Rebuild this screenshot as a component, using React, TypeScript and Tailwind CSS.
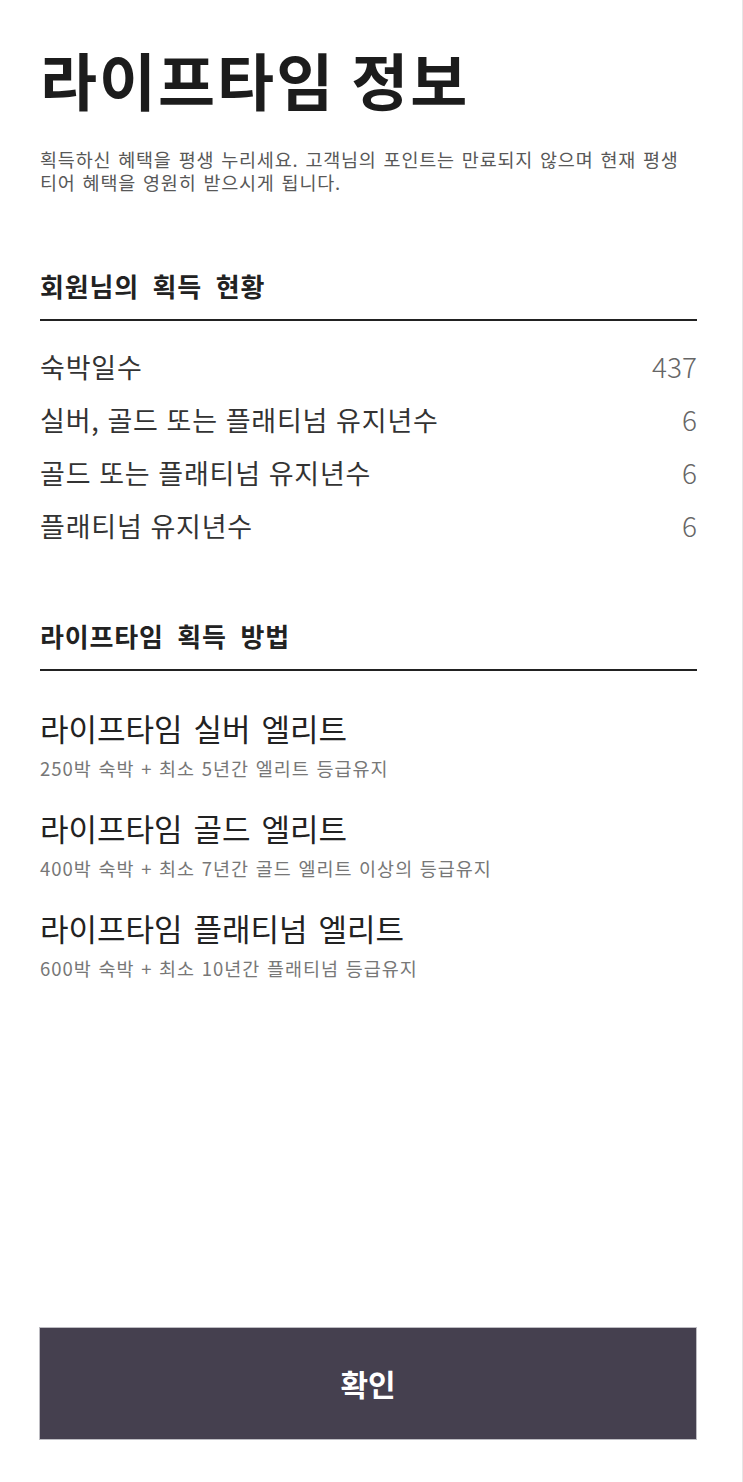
import React from "react";

const font = { fontFamily: '"Noto Sans CJK KR", "Noto Sans", sans-serif' };

const stats: [string, string][] = [
  ["숙박일수", "437"],
  ["실버, 골드 또는 플래티넘 유지년수", "6"],
  ["골드 또는 플래티넘 유지년수", "6"],
  ["플래티넘 유지년수", "6"],
];

const methods: [string, string][] = [
  ["라이프타임 실버 엘리트", "250박 숙박 + 최소 5년간 엘리트 등급유지"],
  ["라이프타임 골드 엘리트", "400박 숙박 + 최소 7년간 골드 엘리트 이상의 등급유지"],
  ["라이프타임 플래티넘 엘리트", "600박 숙박 + 최소 10년간 플래티넘 등급유지"],
];

export default function App() {
  return (
    <div
      className="w-[743px] min-h-[1482px] bg-white flex flex-col pl-[40px] pr-[45px] border-r border-[#e6e6e6]"
      style={font}
    >
      <h1 className="pt-[48px] text-[62px] leading-[62px] font-bold text-[#1c1c1c] tracking-[2px]">
        라이프타임 정보
      </h1>
      <p className="mt-[38px] text-[18.5px] leading-[23px] text-[#585858] tracking-[0.8px] [word-spacing:2px] whitespace-nowrap">
        획득하신 혜택을 평생 누리세요. 고객님의 포인트는 만료되지 않으며 현재 평생
        <br />
        티어 혜택을 영원히 받으시게 됩니다.
      </p>

      <h2 className="mt-[77px] pb-[18px] border-b-2 border-[#222] text-[26px] leading-[30px] font-semibold text-[#222] tracking-[0.8px] [word-spacing:7px]">
        회원님의 획득 현황
      </h2>
      <div className="mt-[19px] flex flex-col">
        {stats.map(([label, value]) => (
          <div key={label} className="flex items-center justify-between h-[53px]">
            <span className="text-[27px] leading-[53px] text-[#333] tracking-[0.8px] [word-spacing:1px]">
              {label}
            </span>
            <span className="text-[28px] leading-[53px] text-[#666] font-light">{value}</span>
          </div>
        ))}
      </div>

      <h2 className="mt-[69px] pb-[18px] border-b-2 border-[#222] text-[26px] leading-[30px] font-semibold text-[#222] tracking-[0.8px] [word-spacing:7px]">
        라이프타임 획득 방법
      </h2>
      <div className="mt-[39px] flex flex-col">
        {methods.map(([title, sub]) => (
          <div key={title} className="flex flex-col h-[100px]">
            <div className="text-[31px] leading-[36px] text-[#222] [word-spacing:4px]">{title}</div>
            <div className="mt-[10px] text-[18.5px] leading-[24px] text-[#777] tracking-[1px] [word-spacing:1.5px]">
              {sub}
            </div>
          </div>
        ))}
      </div>

      <div className="mt-auto mb-[42px] -ml-px">
        <button className="w-[658px] h-[113px] bg-[#45404f] border border-[#bdbcc2] text-white text-[30px] font-bold flex items-center justify-center">
          확인
        </button>
      </div>
    </div>
  );
}
